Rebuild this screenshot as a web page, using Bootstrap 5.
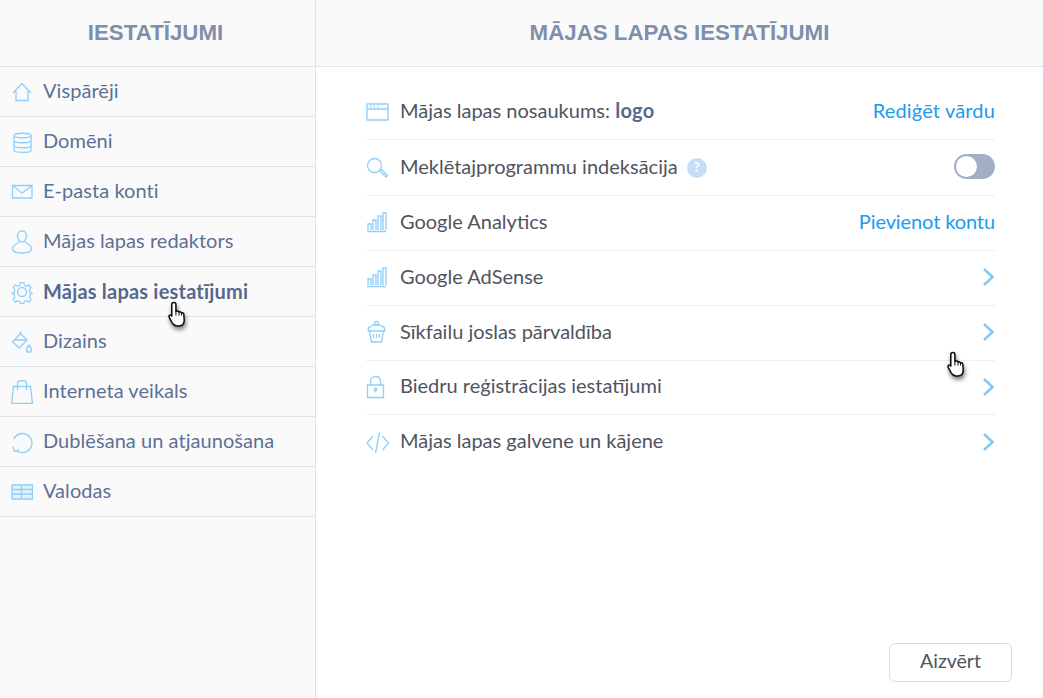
<!doctype html>
<html lang="lv">
<head>
<meta charset="utf-8">
<title>Iestatījumi</title>
<link href="https://cdn.jsdelivr.net/npm/bootstrap@5.3.0/dist/css/bootstrap.min.css" rel="stylesheet">
<style>
html,body{height:100%;margin:0}
body{font-family:Lato,"Open Sans","Liberation Sans",sans-serif;background:#fff;overflow:hidden;position:relative}
.shell{height:698px;width:1043px}
.side{width:316px;flex:none;background:#fafafa;border-right:1px solid #dfe4ea}
.head{height:67px;border-bottom:1px solid #dfe4ea;background:#fafafa;color:#7f8fab;font-family:"Liberation Sans",sans-serif;font-weight:700;font-size:22.3px;letter-spacing:0}
.side .head{padding-right:4px}
.main{min-width:0}
.side-item{height:50px;border-bottom:1px solid #dfe4ea;color:#5d7095;font-size:20px;padding-left:11px;gap:10px;line-height:1;letter-spacing:.05px}
.side-item>span{padding-bottom:4px}
.side-item.on{font-weight:700;color:#55688d;letter-spacing:.2px}
.side-item.on>span{padding-bottom:2px}
.ico{width:22px;height:24px;flex:none;fill:none;stroke:#8fd0fb;stroke-width:1.35}
.setlist{padding:17px 48px 0 50px}
.set-row{height:55px;border-bottom:1px solid #eeeff1;color:#4f5460;font-size:20px;gap:11px;line-height:1}
.set-row.tall{height:56px}
.set-row.short{height:54px}
.set-row.last{border-bottom:0}
.set-row .ico{width:23px;margin-bottom:2px}
.set-row.tall .ico{margin-bottom:0}
.set-row>span,.act{padding-bottom:5px}
.set-row.tall>span,.set-row.tall>.act{padding-bottom:3px}
.set-row b{color:#55688d;letter-spacing:.3px}
.act{color:#1a9bf0;text-decoration:none;margin-left:auto;letter-spacing:.15px}
.act.act-tight{letter-spacing:-.1px}
.chev{margin-left:auto;margin-bottom:2px;width:13px;height:20px;fill:none;stroke:#84c9f8;stroke-width:2.6;flex:none}
.set-row.tall>.hint{width:20px;height:20px;border-radius:50%;background:#c5def6;color:#fff;font-size:13px;font-weight:700;margin-left:-2px;padding:0}
.set-row.tall>.tog{margin-left:auto;margin-bottom:2px;width:41px;height:25px;border-radius:13px;background:#a1aec3;padding:2px;flex:none}
.tog i{display:block;width:21px;height:21px;border-radius:50%;background:#fff}
.close-btn{width:123px;height:39px;border:1px solid #d7dbe0;border-radius:6px;color:#4f5460;font-size:19.5px;background:#fff;padding:0 0 3px;line-height:1}
.foot{padding:0 31px 16px 0}
.hand{position:absolute;width:22px;height:27px;filter:drop-shadow(1px 3px 2px rgba(0,0,0,.5))}
.hand-a{left:167px;top:301px}
.hand-b{left:946px;top:351px}
</style>
</head>
<body>
<div class="shell d-flex">
  <aside class="side d-flex flex-column">
    <div class="head d-flex align-items-center justify-content-center">IESTATĪJUMI</div>
    <div class="side-item d-flex align-items-center"><svg class="ico" viewBox="0 0 22 24"><path d="M2 13 11 3.500 20 13M5 11v9.500h12V11"/></svg><span>Vispārēji</span></div>
    <div class="side-item d-flex align-items-center"><svg class="ico" viewBox="0 0 22 24"><path d="M3 5.500C3 2.500 20 2.500 20 5.500V20.500C20 23 3 23 3 20.500ZM3 5.500C3 8.500 20 8.500 20 5.500M3 10.500c0 3 17 3 17 0M3 15.500c0 3 17 3 17 0"/></svg><span>Domēni</span></div>
    <div class="side-item d-flex align-items-center"><svg class="ico" viewBox="0 0 22 24"><path d="M1.500 5.500h19.500v12.500H1.500ZM1.500 5.500l9.750 7.500L21 5.500"/></svg><span>E-pasta konti</span></div>
    <div class="side-item d-flex align-items-center"><svg class="ico" viewBox="0 0 22 24"><path d="M11 1c3 0 4.500 2 4.500 5 0 3-2 6-4.500 6s-4.500-3-4.500-6c0-3 1.500-5 4.500-5ZM8 11.500c0 2-6.500 3-6.500 7 0 2.800 4 4.500 9.500 4.500s9.500-1.700 9.500-4.500c0-4-6.500-5-6.500-7"/></svg><span>Mājas lapas redaktors</span></div>
    <div class="side-item on d-flex align-items-center"><svg class="ico" viewBox="0 0 22 24"><path d="M9 1.500h4l.6 3 2.400 1 2.600-1.600 2.400 3-1.800 2.400.4 2.700 2.400 1-.0 1-2.400 1-.4 2.700 1.800 2.400-2.400 3-2.600-1.600-2.400 1-.6 2h-4l-.6-2-2.400-1-2.600 1.600-2.400-3 1.800-2.400-.4-2.700-2.400-1v-1l2.400-1 .4-2.700-1.800-2.400 2.400-3 2.600 1.600 2.400-1Z" transform="translate(1.200 1.300) scale(.9)"/><circle cx="11" cy="12" r="4.500"/></svg><span>Mājas lapas iestatījumi</span></div>
    <div class="side-item d-flex align-items-center"><svg class="ico" viewBox="0 0 22 24"><path d="M9.500 3.500 1.500 12l7 6 7.500-8ZM3.500 10h11M8.500 3.500l1.500-2M18 15c1.500 2 2.500 3.500 2.500 4.700a2.500 2.500 0 0 1-5 0c0-1.200 1-2.700 2.500-4.700Z"/></svg><span>Dizains</span></div>
    <div class="side-item d-flex align-items-center"><svg class="ico bag" viewBox="0 0 22 24"><path d="M2.500 6.500h17l2 17H.5ZM6.500 10V4C6.500 1.500 8 .5 11 .5s4.500 1 4.500 3.500V10"/></svg><span>Interneta veikals</span></div>
    <div class="side-item d-flex align-items-center"><svg class="ico" viewBox="0 0 22 24"><path d="M5.500 20.500A9.500 9.500 0 1 0 2.800 9M2 17l1.500 4.500 4.500-1.500"/></svg><span>Dublēšana un atjaunošana</span></div>
    <div class="side-item d-flex align-items-center"><svg class="ico" viewBox="0 0 22 24"><path d="M1 5h20.500v14H1Z" fill="#e3f3fe"/><path d="M1 9.500h20.500M1 14h20.500M10.500 5v14"/></svg><span>Valodas</span></div>
  </aside>
  <main class="main flex-grow-1 d-flex flex-column">
    <div class="head d-flex align-items-center justify-content-center">MĀJAS LAPAS IESTATĪJUMI</div>
    <div class="setlist">
      <div class="set-row tall d-flex align-items-center"><svg class="ico" viewBox="0 0 23 24"><path d="M1 4h21v16H1ZM1 9h21M4 6.500h1.500M7.500 6.500H9M11 6.500h1.500"/></svg><span>Mājas lapas nosaukums: <b>logo</b></span><a class="act" href="#">Rediģēt vārdu</a></div>
      <div class="set-row tall d-flex align-items-center"><svg class="ico" viewBox="0 0 23 24"><circle cx="8.500" cy="9.500" r="7"/><path d="M13.500 14.500l6.500 6.500 1.500-1.500-6.500-6.500"/></svg><span>Meklētajprogrammu indeksācija</span><span class="hint d-flex align-items-center justify-content-center">?</span><span class="tog"><i></i></span></div>
      <div class="set-row d-flex align-items-center"><svg class="ico" viewBox="0 0 23 24"><path d="M1 21.500h19M2 20v-6h3v6M7 20V10h3v10M12 20V6h3v14M17 20V3h3v17"/></svg><span>Google Analytics</span><a class="act act-tight" href="#">Pievienot kontu</a></div>
      <div class="set-row d-flex align-items-center"><svg class="ico" viewBox="0 0 23 24"><path d="M1 21.500h19M2 20v-6h3v6M7 20V10h3v10M12 20V6h3v14M17 20V3h3v17"/></svg><span>Google AdSense</span><svg class="chev" viewBox="0 0 13 20"><path d="M2 2l8.500 8L2 18"/></svg></div>
      <div class="set-row d-flex align-items-center"><svg class="ico" viewBox="0 0 23 24"><circle cx="10.500" cy="3.500" r="2"/><path d="M4.500 11c-3 0-3-4 .5-4.500C6.500 4 14.500 4 16 6.500 19.500 7 19.500 11 16.500 11ZM1.500 11h18M3.500 11l2 11h10l2-11M7.500 14v4M10.500 14v4M13.500 14v4"/></svg><span>Sīkfailu joslas pārvaldība</span><svg class="chev" viewBox="0 0 13 20"><path d="M2 2l8.500 8L2 18"/></svg></div>
      <div class="set-row short d-flex align-items-center"><svg class="ico" viewBox="0 0 23 24"><path d="M1.500 10h16v12.500h-16ZM4.500 10V6.500C4.500 3.500 6.500 1.500 9.500 1.500s5 2 5 5V10M9.500 14.500v3"/><circle cx="9.500" cy="14.500" r="1.300"/></svg><span>Biedru reģistrācijas iestatījumi</span><svg class="chev" viewBox="0 0 13 20"><path d="M2 2l8.500 8L2 18"/></svg></div>
      <div class="set-row last d-flex align-items-center"><svg class="ico" viewBox="0 0 23 24"><path d="M7 6 1 13l6 7M16.500 6l6 7-6 7M13.500 2.500 9.500 23"/></svg><span>Mājas lapas galvene un kājene</span><svg class="chev" viewBox="0 0 13 20"><path d="M2 2l8.500 8L2 18"/></svg></div>
    </div>
    <div class="foot mt-auto d-flex justify-content-end"><button type="button" class="btn close-btn">Aizvērt</button></div>
  </main>
</div>
<svg class="hand hand-a" viewBox="0 0 20 26"><path d="M6 1.500c1.300 0 2 .8 2 2V10l1-.3c1-.2 1.700.2 2 .9 1-.4 2-.1 2.300.8 1-.3 2.200.2 2.300 1.400l.4 5.700c0 3.300-2 5.500-5 5.500H9c-2.500 0-3.500-1-4.800-3.200L1.500 15.500c-.7-1.200.7-2.600 2-1.600L4 14.500V3.500c0-1.200.8-2 2-2Z" fill="#fff" stroke="#111" stroke-width="1.500" stroke-linejoin="round"/><path d="M8 10v4M11 10.600V14M13.400 11.400V14" stroke="#111" stroke-width="1" fill="none"/></svg>
<svg class="hand hand-b" viewBox="0 0 20 26"><path d="M6 1.500c1.300 0 2 .8 2 2V10l1-.3c1-.2 1.700.2 2 .9 1-.4 2-.1 2.300.8 1-.3 2.200.2 2.300 1.400l.4 5.700c0 3.300-2 5.500-5 5.500H9c-2.500 0-3.500-1-4.800-3.200L1.500 15.500c-.7-1.200.7-2.600 2-1.600L4 14.500V3.500c0-1.200.8-2 2-2Z" fill="#fff" stroke="#111" stroke-width="1.500" stroke-linejoin="round"/><path d="M8 10v4M11 10.600V14M13.400 11.400V14" stroke="#111" stroke-width="1" fill="none"/></svg>
<script src="https://cdn.jsdelivr.net/npm/bootstrap@5.3.0/dist/js/bootstrap.bundle.min.js"></script>
</body>
</html>
